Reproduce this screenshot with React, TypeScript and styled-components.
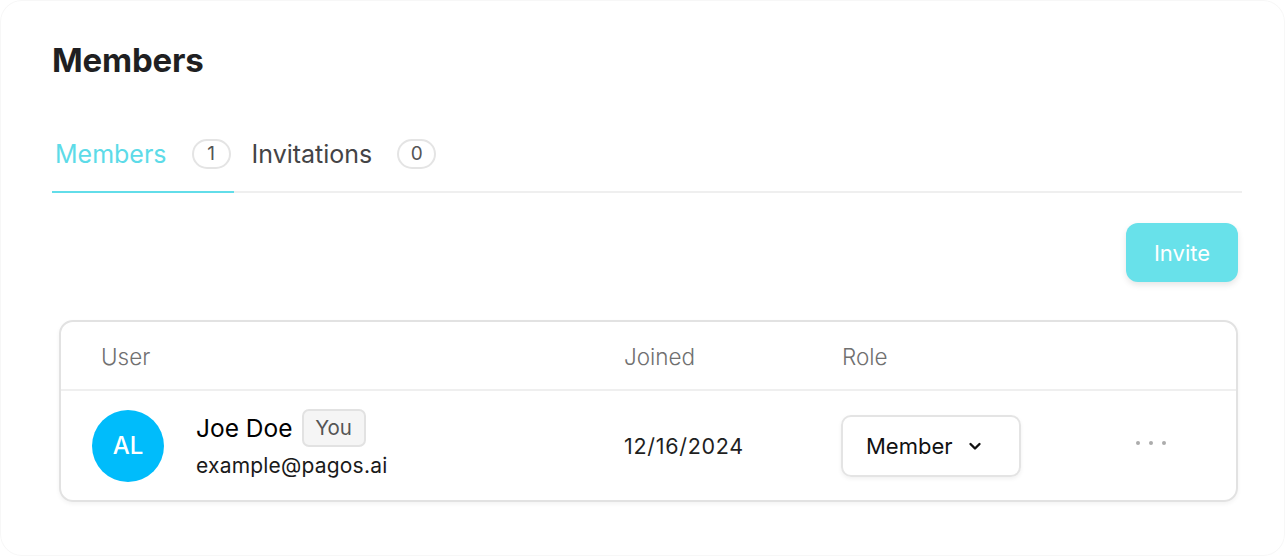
import React from "react";
import styled, { createGlobalStyle } from "styled-components";

const Global = createGlobalStyle`
  html, body { margin: 0; padding: 0; background: #ffffff; }
  body { font-family: Inter, "Noto Sans", Arial, sans-serif; color: #1f1f1f; }
  * { box-sizing: border-box; }
`;

const Page = styled.div`
  width: 1285px;
  height: 556px;
  border: 1px solid #f7f7f7;
  border-radius: 22px;
  padding: 39px 42px 0 51px;
  display: flex;
  flex-direction: column;
`;

const Title = styled.h1`
  margin: 0;
  font-size: 33px;
  line-height: 40px;
  font-weight: 700;
  color: #1f1f22;
  letter-spacing: -0.2px;
`;

const Tabs = styled.div`
  margin-top: 59px;
  display: flex;
  border-bottom: 2px solid #efefef;
`;

const Tab = styled.div<{ $active?: boolean }>`
  display: flex;
  align-items: center;
  gap: 25px;
  padding: 0 3px 22px 3px;
  margin-bottom: -2px;
  margin-right: 15px;
  border-bottom: 2px solid ${(p) => (p.$active ? "#62dde9" : "transparent")};
  font-size: 25px;
  line-height: 30px;
  color: ${(p) => (p.$active ? "#5ddbe8" : "#444446")};
`;

const Count = styled.span`
  display: inline-flex;
  align-items: center;
  justify-content: center;
  width: 39px;
  height: 30px;
  border: 2px solid #e4e4e4;
  border-radius: 15px;
  font-size: 19px;
  color: #555;
`;

const Actions = styled.div`
  display: flex;
  justify-content: flex-end;
  margin-top: 30px;
  padding-right: 4px;
`;

const InviteButton = styled.button`
  width: 112px;
  height: 59px;
  border: none;
  border-radius: 12px;
  background: #68e1ea;
  color: #ffffff;
  font-family: inherit;
  font-size: 22px;
  box-shadow: 0 3px 6px rgba(0, 0, 0, 0.1);
`;

const Table = styled.div`
  margin: 38px 4px 0 7px;
  border: 2px solid #e2e2e2;
  border-radius: 14px;
  box-shadow: 0 2px 4px rgba(0, 0, 0, 0.05);
  overflow: hidden;
`;

const Row = styled.div<{ $header?: boolean }>`
  display: grid;
  grid-template-columns: 563px 217px 295px 1fr;
  align-items: center;
  height: ${(p) => (p.$header ? "69px" : "109px")};
  border-bottom: ${(p) => (p.$header ? "2px solid #efefef" : "none")};
`;

const HeadCell = styled.div<{ $pad?: number }>`
  padding-left: ${(p) => p.$pad ?? 0}px;
  padding-top: 2px;
  font-size: 22.5px;
  font-weight: 300;
  color: #707070;
`;

const UserCell = styled.div`
  display: flex;
  align-items: center;
  gap: 32px;
  padding-left: 31px;
`;

const Avatar = styled.div`
  width: 72px;
  height: 72px;
  border-radius: 50%;
  background: #00bcfb;
  color: #fff;
  display: flex;
  align-items: center;
  justify-content: center;
  font-size: 24px;
  font-weight: 500;
`;

const UserInfo = styled.div`
  display: flex;
  flex-direction: column;
  gap: 5px;
  margin-top: -3px;
`;

const NameLine = styled.div`
  display: flex;
  align-items: center;
  gap: 9px;
  font-size: 24.5px;
  color: #000;
`;

const YouBadge = styled.span`
  display: inline-flex;
  align-items: center;
  justify-content: center;
  width: 64px;
  height: 38px;
  border: 2px solid #e2e2e2;
  border-radius: 7px;
  background: #f5f5f5;
  color: #555;
  font-size: 20.5px;
`;

const Email = styled.div`
  font-size: 21px;
  line-height: 28px;
  letter-spacing: 0.2px;
  color: #1a1a1a;
`;

const DateCell = styled.div`
  font-size: 21.5px;
  letter-spacing: 0.7px;
  color: #1f1f1f;
`;

const Select = styled.div`
  width: 180px;
  height: 62px;
  border: 2px solid #e4e4e4;
  border-radius: 10px;
  box-shadow: 0 2px 4px rgba(0, 0, 0, 0.06);
  display: flex;
  align-items: center;
  gap: 14px;
  padding-left: 23px;
  font-size: 22px;
  color: #111;
`;

const Dots = styled.div`
  display: flex;
  gap: 9px;
  margin-top: -6px;
  & > span {
    width: 4px;
    height: 4px;
    border-radius: 50%;
    background: #acacac;
  }
`;

const Chevron = () => (
  <svg width="16" height="16" viewBox="0 0 16 16" fill="none">
    <path d="M3.5 6l4.5 4.5L12.5 6" stroke="#111" strokeWidth="2.4" strokeLinecap="round" strokeLinejoin="round" />
  </svg>
);

export default function App() {
  return (
    <>
      <Global />
      <Page>
        <Title>Members</Title>
        <Tabs>
          <Tab $active>
            Members <Count>1</Count>
          </Tab>
          <Tab>
            Invitations <Count>0</Count>
          </Tab>
        </Tabs>
        <Actions>
          <InviteButton>Invite</InviteButton>
        </Actions>
        <Table>
          <Row $header>
            <HeadCell $pad={40}>User</HeadCell>
            <HeadCell>Joined</HeadCell>
            <HeadCell $pad={1}>Role</HeadCell>
            <HeadCell />
          </Row>
          <Row>
            <UserCell>
              <Avatar>AL</Avatar>
              <UserInfo>
                <NameLine>
                  Joe Doe <YouBadge>You</YouBadge>
                </NameLine>
                <Email>example@pagos.ai</Email>
              </UserInfo>
            </UserCell>
            <DateCell>12/16/2024</DateCell>
            <Select>
              Member <Chevron />
            </Select>
            <Dots>
              <span />
              <span />
              <span />
            </Dots>
          </Row>
        </Table>
      </Page>
    </>
  );
}
